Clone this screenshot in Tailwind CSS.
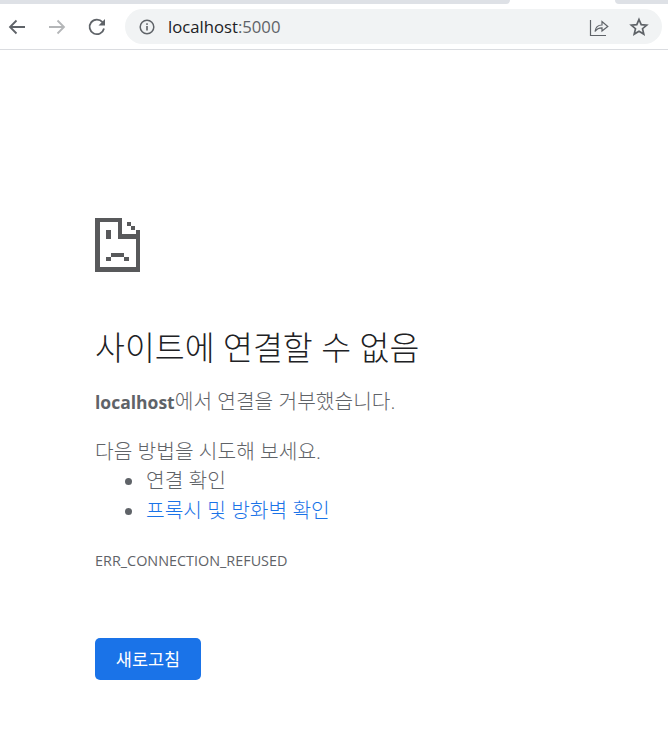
<!DOCTYPE html>
<html lang="ko">
<head>
    <meta charset="UTF-8">
    <title>localhost</title>
    <script src="https://cdn.jsdelivr.net/npm/@tailwindcss/browser@4"></script>
</head>
<body class="bg-white font-['Open_Sans','Noto_Sans_CJK_KR',sans-serif] overflow-hidden">
    <!-- tab strip -->
    <div class="flex h-[4px] bg-white">
        <div class="w-[510px] h-[4px] bg-[#dee1e6] rounded-br-lg"></div>
        <div class="w-[105px] h-[4px] bg-white"></div>
        <div class="flex-1 h-[4px] bg-[#dee1e6] rounded-bl-lg"></div>
    </div>

    <!-- toolbar -->
    <div class="flex items-center h-[45px] pl-[7px] pr-[6px] border-b border-[#dadce0] box-content">
        <svg class="w-5 h-5" viewBox="0 0 20 20" fill="none" stroke="#5f6368" stroke-width="1.8"><path d="M18 10H3M9.500 3.500 3 10l6.500 6.500"/></svg>
        <svg class="w-5 h-5 ml-[20px]" viewBox="0 0 20 20" fill="none" stroke="#b4b6b8" stroke-width="1.8"><path d="M2 10h15M10.500 3.500 17 10l-6.500 6.500"/></svg>
        <svg class="w-5 h-5 ml-[20px]" viewBox="0 0 20 20" fill="none" stroke="#5f6368" stroke-width="1.800"><path d="M17 11.500A7.300 7.300 0 1 1 15.500 5.200"/><path d="M18 2v6.500h-6.500" fill="#5f6368" stroke="none"/></svg>
        <div class="flex items-center flex-1 h-[35px] ml-[18px] pl-[14px] pr-[13px] rounded-full bg-[#f1f3f4]">
            <svg class="w-4 h-4 shrink-0" viewBox="0 0 16 16" fill="none"><circle cx="8" cy="8" r="6.800" stroke="#5f6368" stroke-width="1.500"/><rect x="7.200" y="7" width="1.600" height="4.500" fill="#5f6368"/><rect x="7.200" y="4.300" width="1.600" height="1.600" fill="#5f6368"/></svg>
            <span class="ml-[13px] text-[16.700px] leading-[35px] text-[#202124]">localhost<span class="text-[#5f6368]">:5000</span></span>
            <svg class="w-[20px] h-[20px] ml-auto" viewBox="0 0 20 20" fill="none" stroke="#5f6368" stroke-width="1.200"><path d="M1.500 3v15.500H17"/><path d="M6 14.500c.5-4 3-6.500 7-6.500V4.500L18.800 9.500 13 14v-3.200c-3 0-5.300 1-7 3.700z"/></svg>
            <svg class="w-[20px] h-[20px] ml-[20px]" viewBox="0 0 20 20" fill="none" stroke="#5f6368" stroke-width="1.700"><path d="M10 2.500l2.200 5.100 5.500.5-4.200 3.600 1.300 5.400L10 14.200l-4.800 2.900 1.300-5.400-4.200-3.600 5.500-.5z"/></svg>
        </div>
    </div>

    <!-- error page -->
    <main class="pl-[95px] pt-[167px]">
        <svg class="w-[45px] h-[55px]" viewBox="30 38 135 162" fill="#58595b" shape-rendering="crispEdges">
            <path d="M30 38h82v14H45v134h107V102H98V38h14v50h40V75h13v125H30z"/>
            <path d="M125 50h12v12h-12zM138 63h12v12h-12zM63 75h14v28H63zM77 143h41v12H77zM63 155h14v13H63zM118 155h14v13h-14z"/>
        </svg>

        <h1 class="mt-[54px] text-[32.500px] leading-[44px] font-light text-[#202124]">사이트에 연결할 수 없음</h1>
        <p class="mt-[19px] text-[20.300px] leading-[24px] text-[#5f6368] font-light"><b class="font-bold text-[17.500px]">localhost</b>에서 연결을 거부했습니다.</p>
        <p class="mt-[25px] text-[20.300px] leading-[24px] text-[#5f6368] font-light">다음 방법을 시도해 보세요.</p>
        <ul class="pl-[51px] list-disc text-[20.300px] text-[#5f6368] font-light">
            <li class="mt-[5px] leading-[25px]">연결 확인</li>
            <li class="mt-[5px] leading-[25px] text-[#1a73e8] marker:text-[#5f6368]">프록시 및 방화벽 확인</li>
        </ul>
        <p class="mt-[28px] text-[14.400px] leading-[20px] text-[#5f6368]">ERR_CONNECTION_REFUSED</p>
        <button class="block mt-[67px] w-[106px] h-[42px] rounded-[5px] bg-[#1a73e8] text-white text-[17.500px]">새로고침</button>
    </main>
</body>
</html>
